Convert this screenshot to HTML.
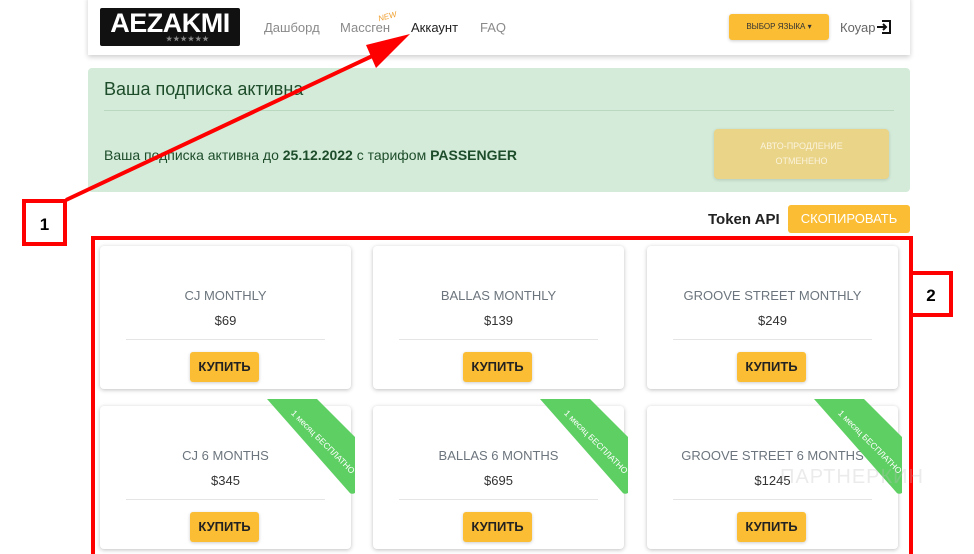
<!DOCTYPE html><html><head><meta charset="utf-8"><style>
*{box-sizing:border-box;margin:0;padding:0}
body{width:974px;height:554px;background:#fff;font-family:"Liberation Sans",sans-serif;position:relative;overflow:hidden}
.abs{position:absolute}
.nav{left:88px;top:-4px;width:822px;height:59px;background:#fff;box-shadow:0 2px 5px rgba(0,0,0,.2)}
.nl{font-size:13px;color:#8a8a8a;top:20px}
.alert{left:88px;top:68px;width:822px;height:124px;background:#d4ebd9;border-radius:4px}
.card{width:251px;height:143px;background:#fff;border-radius:4px;box-shadow:0 1px 4px rgba(0,0,0,.25);overflow:visible}
.card .t{position:absolute;left:0;right:0;top:42px;text-align:center;font-size:13px;color:#6c757d}
.card .p{position:absolute;left:0;right:0;top:67px;text-align:center;font-size:13px;color:#333}
.card .hr{position:absolute;left:26px;right:26px;top:93px;border-top:1px solid #e5e5e5}
.card .b{position:absolute;left:90px;top:106px;width:69px;height:30px;background:#fbbd33;border-radius:3px;font-weight:bold;font-size:13px;text-align:center;line-height:30px;color:#222;box-shadow:0 1px 3px rgba(0,0,0,.2)}
.rib{position:absolute;left:165px;top:-7px;width:94px;height:95px}
</style></head><body>
<div class="abs nav"></div>
<div class="abs" style="left:100px;top:8px;width:140px;height:38px;background:#111;border-radius:2px;color:#fff;font:bold 27px/30px 'Liberation Sans',sans-serif;letter-spacing:-0.5px;text-align:center;padding-top:0px;transform-origin:0 0">AEZAKMI<div style="position:absolute;left:66px;top:28px;font-size:7px;line-height:8px;color:#888;letter-spacing:1px">★★★★★★</div></div>
<div class="abs nl" style="left:264px">Дашборд</div>
<div class="abs nl" style="left:340px">Массген</div>
<div class="abs" style="left:378px;top:12px;font-size:8px;color:#f0a030;transform:rotate(-15deg);font-style:italic">NEW</div>
<div class="abs nl" style="left:411px;color:#222">Аккаунт</div>
<div class="abs nl" style="left:480px">FAQ</div>
<div class="abs" style="left:729px;top:14px;width:100px;height:26px;background:#fbbd33;border-radius:3px;font-size:8px;color:#333;text-align:center;line-height:26px;box-shadow:0 1px 3px rgba(0,0,0,.2)">ВЫБОР ЯЗЫКА ▾</div>
<div class="abs nl" style="left:840px;color:#666">Коуар</div>
<svg class="abs" style="left:876px;top:19px" width="16" height="16" viewBox="0 0 16 16"><path d="M6 2H14V14H6M1 8H10M7 5L10 8L7 11" fill="none" stroke="#111" stroke-width="2"/></svg>
<div class="abs alert"></div>
<div class="abs" style="left:104px;top:79px;font-size:18px;color:#1d4d2a">Ваша подписка активна</div>
<div class="abs" style="left:104px;top:110px;width:790px;border-top:1px solid #b9d8bf"></div>
<div class="abs" style="left:104px;top:147px;font-size:14px;color:#1d4d2a">Ваша подписка активна до <b>25.12.2022</b> с тарифом <b>PASSENGER</b></div>
<div class="abs" style="left:714px;top:129px;width:175px;height:50px;background:#e9d488;border-radius:4px;color:#fbf3dc;font-size:9px;text-align:center;line-height:15px;padding-top:10px;box-shadow:0 1px 3px rgba(0,0,0,.15)">АВТО-ПРОДЛЕНИЕ<br>ОТМЕНЕНО</div>
<div class="abs" style="left:708px;top:211px;font-size:15px;color:#222;font-weight:bold">Token API</div>
<div class="abs" style="left:788px;top:205px;width:122px;height:28px;background:#fbbd33;border-radius:3px;color:#fff;font-size:13px;text-align:center;line-height:28px">СКОПИРОВАТЬ</div>
<div class="abs" style="left:91px;top:236px;width:822px;height:318px;border:4px solid #f00;border-bottom:none"></div>

<div class="abs card" style="left:100px;top:246px"><div class="t">CJ MONTHLY</div><div class="p">$69</div><div class="hr"></div><div class="b">КУПИТЬ</div></div>
<div class="abs card" style="left:373px;top:246px"><div class="t">BALLAS MONTHLY</div><div class="p">$139</div><div class="hr"></div><div class="b">КУПИТЬ</div></div>
<div class="abs card" style="left:647px;top:246px"><div class="t">GROOVE STREET MONTHLY</div><div class="p">$249</div><div class="hr"></div><div class="b">КУПИТЬ</div></div>

<div class="abs card" style="left:100px;top:406px"><div class="t">CJ 6 MONTHS</div><div class="p">$345</div><div class="hr"></div><div class="b">КУПИТЬ</div>
<svg class="rib" viewBox="0 0 94 95"><path d="M2 0H52L90 38V94Q86 96 84 93L2 0Z" fill="#5ecf63"/><text x="0" y="0" transform="translate(56 45) rotate(45)" text-anchor="middle" font-size="8.5" fill="#fff" font-family="Liberation Sans">1 месяц БЕСПЛАТНО</text></svg></div>
<div class="abs card" style="left:373px;top:406px"><div class="t">BALLAS 6 MONTHS</div><div class="p">$695</div><div class="hr"></div><div class="b">КУПИТЬ</div>
<svg class="rib" viewBox="0 0 94 95"><path d="M2 0H52L90 38V94Q86 96 84 93L2 0Z" fill="#5ecf63"/><text x="0" y="0" transform="translate(56 45) rotate(45)" text-anchor="middle" font-size="8.5" fill="#fff" font-family="Liberation Sans">1 месяц БЕСПЛАТНО</text></svg></div>
<div class="abs card" style="left:647px;top:406px"><div class="t">GROOVE STREET 6 MONTHS</div><div class="p">$1245</div><div class="hr"></div><div class="b">КУПИТЬ</div>
<svg class="rib" viewBox="0 0 94 95"><path d="M2 0H52L90 38V94Q86 96 84 93L2 0Z" fill="#5ecf63"/><text x="0" y="0" transform="translate(56 45) rotate(45)" text-anchor="middle" font-size="8.5" fill="#fff" font-family="Liberation Sans">1 месяц БЕСПЛАТНО</text></svg></div>

<div class="abs" style="left:780px;top:466px;font-size:20px;color:rgba(190,190,190,.3);letter-spacing:1px">ПАРТНЕРКИН</div>

<svg class="abs" style="left:0;top:0" width="974" height="554">
<line x1="66" y1="200" x2="385" y2="50" stroke="#f00" stroke-width="4"/>
<polygon points="410,34 376,68 366,45" fill="#f00"/>
<rect x="24" y="201" width="41" height="43" fill="#fff" stroke="#f00" stroke-width="4"/>
<text x="44.5" y="230" text-anchor="middle" font-family="Liberation Sans" font-weight="bold" font-size="17">1</text>
<rect x="911" y="273" width="40" height="42" fill="#fff" stroke="#f00" stroke-width="4"/>
<text x="931" y="301" text-anchor="middle" font-family="Liberation Sans" font-weight="bold" font-size="17">2</text>
</svg>
</body></html>
